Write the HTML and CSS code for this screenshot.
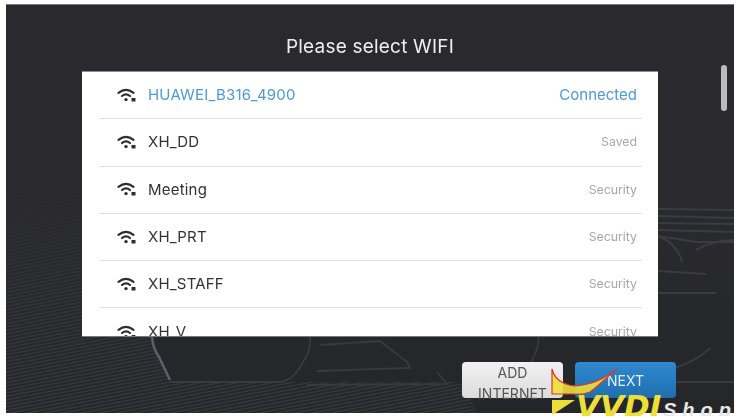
FILE: index.html
```html
<!DOCTYPE html>
<html>
<head>
    <title>Please select WIFI</title>
    <link rel="stylesheet" href="styles.css">
</head>
<body>
    <div class="screen">
        <!-- car body lines behind the list -->
        <svg class="backdrop" width="728" height="409" viewBox="0 0 728 409">
            <defs>
                <pattern id="hatch" width="8" height="3.4" patternUnits="userSpaceOnUse" patternTransform="rotate(-11)">
                    <line x1="0" y1="1" x2="8" y2="1" stroke="#414447" stroke-width="0.9"/>
                </pattern>
                <linearGradient id="fade" x1="0" y1="0" x2="0" y2="1">
                    <stop offset="0" stop-color="#fff" stop-opacity="0"/>
                    <stop offset="0.5" stop-color="#fff" stop-opacity="0.7"/>
                    <stop offset="1" stop-color="#fff" stop-opacity="1"/>
                </linearGradient>
                <mask id="hatchMask">
                    <rect x="0" y="170" width="728" height="239" fill="url(#fade)"/>
                </mask>
            </defs>
            <path d="M0 190 L76 175 L76 333 L146 333 L164 378 L276 378 L460 378 L470 409 L0 409 Z" fill="url(#hatch)" mask="url(#hatchMask)"/>
            <g class="streaks">
                <path d="M652 205 L728 206 M652 212 L728 214 M652 219 L728 220 M652 226 L728 228 M652 232 L690 238 L728 238"/>
                <path d="M652 232 Q672 240 676 258 M690 246 Q708 236 728 236 M652 267 L700 270 M652 289 L710 289"/>
            </g>
            <path class="outline" d="M146 333 Q147 345 153 353 L164 376"/>
            <path class="outline-dim" d="M164 378 L272 378 Q286 378 296 360 Q306 345 304 333"/>
            <path class="outline-dim" d="M314 341 L374 337 L401 358 L404 364 L311 367"/>
            <path class="outline-dim" d="M301 381 L441 380 L431 368"/>
            <path class="outline-dim" d="M533 333 Q532 350 520 366"/>
            <path class="outline-dim" d="M670 378 L728 378 M662 366 Q690 358 704 344"/>
        </svg>

        <h1 class="title">Please select WIFI</h1>

        <div class="wifi-list">
            <div class="wifi-row connected">
                <svg class="wifi-icon" viewBox="0 0 19 14"><use href="#wifi"/></svg>
                <span class="wifi-name">HUAWEI_B316_4900</span>
                <span class="wifi-state">Connected</span>
            </div>
            <div class="wifi-row">
                <svg class="wifi-icon" viewBox="0 0 19 14"><use href="#wifi"/></svg>
                <span class="wifi-name">XH_DD</span>
                <span class="wifi-state">Saved</span>
            </div>
            <div class="wifi-row">
                <svg class="wifi-icon" viewBox="0 0 19 14"><use href="#wifi"/></svg>
                <span class="wifi-name">Meeting</span>
                <span class="wifi-state">Security</span>
            </div>
            <div class="wifi-row">
                <svg class="wifi-icon" viewBox="0 0 19 14"><use href="#wifi"/></svg>
                <span class="wifi-name">XH_PRT</span>
                <span class="wifi-state">Security</span>
            </div>
            <div class="wifi-row">
                <svg class="wifi-icon" viewBox="0 0 19 14"><use href="#wifi"/></svg>
                <span class="wifi-name">XH_STAFF</span>
                <span class="wifi-state">Security</span>
            </div>
            <div class="wifi-row">
                <svg class="wifi-icon" viewBox="0 0 19 14"><use href="#wifi"/></svg>
                <span class="wifi-name">XH_V</span>
                <span class="wifi-state">Security</span>
            </div>
        </div>

        <div class="scroll-thumb"></div>

        <div class="actions">
            <button class="btn btn-add">ADD INTERNET</button>
            <button class="btn btn-next">NEXT</button>
        </div>
    </div>

    <!-- watermark -->
    <div class="watermark">
        <svg class="swoosh" width="74" height="48" viewBox="0 0 74 48">
            <path class="swoosh-fill" d="M1 1 C4 14 18 20 32 17 C46 15 56 8 66 1 C56 9 46 19 39 24 L32 26 L1 26 Z"/>
            <path class="swoosh-flag" d="M1 32 L24 32 L1 47 Z"/>
        </svg>
        <span class="mark-vvdi">VVDI</span>
        <span class="mark-shop">Shop</span>
    </div>

    <svg class="defs" width="0" height="0">
        <symbol id="wifi" viewBox="0 0 19 14">
            <g fill="none" stroke="currentColor" stroke-width="2.2" stroke-linecap="round">
                <path d="M1.5 4.8 Q9 -1 16.5 4.8"/>
                <path d="M5 8 Q9 4.6 13 8"/>
            </g>
            <circle cx="9" cy="11.6" r="1.7" fill="currentColor"/>
            <rect x="14.5" y="10" width="4" height="3.6" rx="0.6" fill="currentColor"/>
        </symbol>
    </svg>
</body>
</html>
```

FILE: styles.css
```css
body {
    margin: 0;
    height: 418px;
    overflow: hidden;
    position: relative;
    background-color: white;
    font-family: Inter, "Liberation Sans", Arial, sans-serif;
}

.screen {
    position: relative;
    margin: 4px 4px 0 6px;
    height: 409px;
    overflow: hidden;
    background: linear-gradient(#2a2a2e, #2a2a2e 200px, #25262a);
    display: flex;
    flex-direction: column;
    border-top: 1px solid #77787a;
    box-sizing: border-box;
    filter: blur(0.35px);
}

.backdrop {
    position: absolute;
    left: 0;
    top: -1px;
}

.streaks path {
    fill: none;
    stroke: #383d41;
    stroke-width: 2;
}

.outline {
    fill: none;
    stroke: #56646b;
    stroke-width: 2.5;
}

.outline-dim {
    fill: none;
    stroke: #363b3e;
    stroke-width: 1.8;
}

.title {
    position: relative;
    margin: 0;
    height: 66px;
    line-height: 83px;
    text-align: center;
    font-size: 19px;
    font-weight: normal;
    letter-spacing: 0.2px;
    color: #eeeeee;
}

.wifi-list {
    position: relative;
    margin-left: 76px;
    width: 576px;
    height: 266px;
    overflow: hidden;
    box-sizing: border-box;
    padding: 0 16px 0 17px;
    background-color: white;
    border-top: 1px solid #8b8c8e;
    border-bottom: 1px solid #77787a;
}

.wifi-row {
    display: flex;
    align-items: center;
    height: 47.3px;
    box-sizing: border-box;
    padding: 0 5px 1px 18px;
    border-bottom: 1px solid #dfe2e3;
    color: #333333;
}

.wifi-row:last-child {
    border-bottom: none;
}

.wifi-icon {
    width: 19px;
    height: 14px;
    color: #2e2e2e;
}

.wifi-name {
    margin-left: 12px;
    font-size: 15px;
    letter-spacing: 0.2px;
}

.wifi-state {
    margin-left: auto;
    font-size: 12.3px;
    color: #a3a8aa;
}

.connected .wifi-name,
.connected .wifi-state {
    color: #4a9bd8;
}

.connected .wifi-state {
    font-size: 15px;
}

.scroll-thumb {
    position: absolute;
    left: 715px;
    top: 60px;
    width: 6px;
    height: 46px;
    border-radius: 3px;
    background-color: #b9bdc0;
}

.actions {
    position: relative;
    display: flex;
    gap: 12px;
    margin: 25px 0 0 456px;
}

.btn {
    width: 101px;
    height: 36px;
    padding: 0;
    border: none;
    border-radius: 4px;
    font-family: inherit;
    font-size: 14px;
}

.btn-add {
    padding: 0 10px;
    line-height: 21px;
    height: 36px;
    color: #555555;
    background: linear-gradient(#f1f1f1, #dcdcdc);
    overflow: visible;
}

.btn-next {
    color: #e0eef9;
    background: linear-gradient(#2f8ad0, #1f6fae);
}

.watermark {
    position: absolute;
    left: 551px;
    top: 368px;
    width: 187px;
    height: 48px;
    overflow: hidden;
}

.swoosh {
    position: absolute;
    left: 0;
    top: 0;
}

.swoosh-fill {
    fill: #ecdf3a;
    fill-opacity: 0.9;
    stroke: #e0352c;
    stroke-width: 1.2;
}

.swoosh-flag {
    fill: #ecdf3a;
}

.mark-vvdi {
    position: absolute;
    left: 25px;
    top: 20px;
    font-family: "DejaVu Sans", sans-serif;
    font-size: 31px;
    line-height: 36px;
    font-weight: bold;
    font-style: italic;
    color: #ecdf3a;
}

.mark-shop {
    position: absolute;
    left: 112px;
    top: 30px;
    font-family: "Liberation Sans", sans-serif;
    font-size: 20px;
    line-height: 24px;
    font-weight: bold;
    font-style: italic;
    letter-spacing: 6px;
    color: #e6e6e6;
}

.defs {
    position: absolute;
}
```
